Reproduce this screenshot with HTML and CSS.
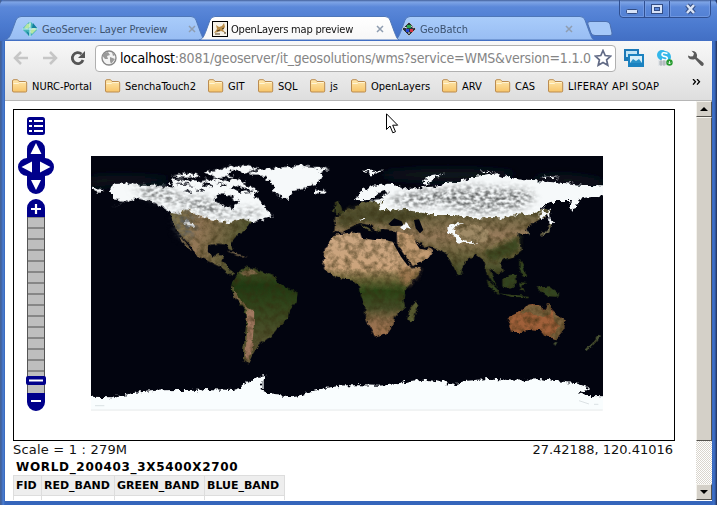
FILE: index.html
```html
<!DOCTYPE html>
<html lang="en">
<head>
<meta charset="utf-8">
<title>OpenLayers map preview</title>
<link rel="stylesheet" href="styles.css">
</head>
<body>
<svg class="defs" aria-hidden="true">
  <defs>
    <linearGradient id="tabIdle" x2="0" y2="1"><stop offset="0" stop-color="#a9ccfa"/><stop offset="1" stop-color="#98bdf3"/></linearGradient>
    <linearGradient id="tabOn" x2="0" y2="1"><stop offset="0" stop-color="#fff"/><stop offset="1" stop-color="#f7f7f7"/></linearGradient>
    <linearGradient id="fold" x2="0" y2="1"><stop offset="0" stop-color="#ffe9b0"/><stop offset="1" stop-color="#f7c468"/></linearGradient>
    <symbol id="folder" viewBox="0 0 16 14"><path d="M.5 12V2Q.5.7 2 .7H5.5L7 2.5H13.5Q14.7 2.5 14.7 4V12Q14.7 13 13.5 13H2Q.5 13 .5 12Z" fill="url(#fold)" stroke="#bb8c50"/><path d="M1.5 4.5H6.5L7.5 3.5H13.7" fill="none" stroke="#fff4d4"/></symbol>
    <symbol id="tab" viewBox="0 0 200 24"><path d="M0 24C4 23 5 20 7 15L11 4Q12.5.5 16 .5H186Q190 .5 191 4L195 15C197 20 198 23 200 24Z"/></symbol>
  </defs>
</svg>
<div class="window">
  <header class="titlebar">
    <div class="tab">
      <svg class="shape idle"><use href="#tab"/></svg>
      <svg class="fav" viewBox="0 0 16 16"><path d="M8 0L16 8L8 16L0 8Z" fill="#44b4b8"/><path d="M5 3L9 2L8 6L5 8L2 7ZM9 8L13 6L14 9L10 13L8 11Z" fill="#b5e6a2"/><path d="M8 0V16M0 8H16" stroke="#d2f2f5"/><path d="M11 2L15 7L10 7ZM4 10L7 12L7 15Z" fill="#157e9e"/></svg>
      <span class="label t1">GeoServer: Layer Preview</span>
      <svg class="close" viewBox="0 0 8 8"><path d="M1 1L7 7M7 1L1 7"/></svg>
    </div>
    <div class="tab second">
      <svg class="shape on"><use href="#tab"/></svg>
      <svg class="fav" viewBox="0 0 16 16"><rect x=".5" y=".5" width="15" height="15" fill="#f6f2e7" stroke="#000"/><path d="M2 12L5 8L4 4L7 6L10 5L12 2L13 6L11 9L14 12L9 10L6 11Z" fill="#b98d48"/><path d="M3 13H8M10 8L12 7M5 10L8 9M12 12H14" stroke="#4c3a20"/></svg>
      <span class="label t2">OpenLayers map preview</span>
      <svg class="close" viewBox="0 0 8 8"><path d="M1 1L7 7M7 1L1 7"/></svg>
    </div>
    <div class="tab third">
      <svg class="shape idle"><use href="#tab"/></svg>
      <svg class="fav small" viewBox="0 0 14 14"><path d="M7 0L14 7L7 14L0 7Z" fill="#29323c" stroke="#e6eefb" stroke-width=".6"/><path d="M5 3H9V6H5Z" fill="#29a84b"/><path d="M4 7H7V10H4Z" fill="#2446d8"/><path d="M8 7H11V10H8Z" fill="#d23646"/><path d="M2 5L5 6M9 4L12 6M7 10V12" stroke="#dce7f4"/></svg>
      <span class="label t3">GeoBatch</span>
      <svg class="close" viewBox="0 0 8 8"><path d="M1 1L7 7M7 1L1 7"/></svg>
    </div>
    <svg class="newtab" viewBox="0 0 26 16"><path d="M3 .5H19Q22 .5 23 3L25 12Q25.5 14.5 23 14.5H8Q5 14.5 4 12L.8 3Q0 .5 3 .5Z" fill="#a5c8f8" stroke="#4b6fae"/></svg>
    <svg class="winbtns" viewBox="0 0 94 18"><path d="M1.5 0V14Q1.5 17.500 5 17.500H89Q92.500 17.500 92.500 14V0M26.500 1V17M51.500 1V17" fill="none" stroke="#2f4f91"/><path d="M2.500 1V14Q3 16.500 5 16.500H25.500V1M27.500 1V16.500H50.500V1M52.500 1V16.500H89Q91.500 16.500 91.500 14V1" fill="none" stroke="#7da1e6" opacity=".65"/><rect x="8.500" y="9.500" width="11" height="4" rx="1" fill="#d6e2f8" stroke="#334d83"/><rect x="33.500" y="4.500" width="11" height="9" fill="#d6e2f8" stroke="#334d83"/><rect x="36.500" y="7.500" width="5" height="3" fill="#5b86d6" stroke="#334d83"/><path d="M69 5L76 13M76 5L69 13" stroke="#334d83" stroke-width="4.500"/><path d="M69 5L76 13M76 5L69 13" stroke="#d9e4f7" stroke-width="2.500"/></svg>
  </header>
  <div class="chrome">
    <nav class="toolbar">
      <svg class="nav" viewBox="0 0 80 20"><path d="M2 10H15M8 4L2 10L8 16M30 10H43M37 4L43 10L37 16" fill="none" stroke="#c6c6c6" stroke-width="2.500"/><path d="M68.500 6A5.500 5.500 0 1 0 70 12" fill="none" stroke="#555" stroke-width="2.800"/><path d="M72 3V10H65Z" fill="#555"/></svg>
      <div class="omnibox">
        <svg class="globe" viewBox="0 0 16 16"><circle cx="8" cy="8" r="7" fill="#f3f3f3" stroke="#858585" stroke-width="1.300"/><path d="M3 3L7 2L9 5L6 6L7 9L4 9L1.500 6ZM9 7L14 9L10 14L9 11ZM11 2L14 5L12 6Z" fill="#9a9a9a"/></svg>
        <span class="url"><b>localhost</b>:8081/geoserver/it_geosolutions/wms?service=WMS&amp;version=1.1.0</span>
        <svg class="star" viewBox="0 0 18 18"><path d="M9 1.500L11.200 6.500L16.700 7.100L12.600 10.800L13.800 16.200L9 13.400L4.200 16.200L5.400 10.800L1.300 7.100L6.800 6.500Z" fill="#fff" stroke="#626b86" stroke-width="1.700"/></svg>
      </div>
      <svg class="ext pics" viewBox="0 0 20 20"><rect width="15" height="12" y="1" fill="#1c79b7"/><rect x="2" y="3" width="11" height="6" fill="#c3e5f5"/><rect x="4" y="6" width="16" height="13" fill="#1b82c0"/><rect x="6" y="8" width="12" height="7" fill="#d8eff8"/><path d="M6 15L9 11L12 13L15 11L18 15Z" fill="#2a91c9"/></svg>
      <svg class="ext skype" viewBox="0 0 17 18"><circle cx="6" cy="6" r="5" fill="#34b7ea"/><circle cx="9" cy="8" r="6" fill="#34b7ea"/><path d="M11.500 4.500Q6 2.500 6 5.500Q6 7 9 7.500Q12 8.200 11 10.200Q9.500 12 6 10" fill="none" stroke="#fff" stroke-width="1.600"/><path d="M2 11H12V17H2Z" fill="#e3e6e9"/><path d="M3 13H11M3 15H11M5 11V17M8 11V17" stroke="#8c969c" stroke-width=".6"/><circle cx="13.500" cy="13.500" r="3.200" fill="#269b2e"/><path d="M13.500 12V15M12 13.500L13.500 15L15 13.500" fill="none" stroke="#fff" stroke-width=".8"/></svg>
      <svg class="ext wrench" viewBox="0 0 18 17"><path d="M1 5.500Q1 9.500 5.500 9.500Q7 9.500 8 9L14 15.500Q15.500 16.500 16.500 15Q17.300 13.700 16 12.600L9.800 7.500Q11 1 4.500.8L7 3.500L6 6.200L3.500 6.600Z" fill="#5a5a5a"/></svg>
    </nav>
    <nav class="bookmarks">
      <a><svg><use href="#folder"/></svg><span>NURC-Portal</span></a>
      <a><svg><use href="#folder"/></svg><span>SenchaTouch2</span></a>
      <a><svg><use href="#folder"/></svg><span>GIT</span></a>
      <a><svg><use href="#folder"/></svg><span>SQL</span></a>
      <a><svg><use href="#folder"/></svg><span>js</span></a>
      <a><svg><use href="#folder"/></svg><span>OpenLayers</span></a>
      <a><svg><use href="#folder"/></svg><span>ARV</span></a>
      <a><svg><use href="#folder"/></svg><span>CAS</span></a>
      <a><svg><use href="#folder"/></svg><span class="wide">LIFERAY API SOAP</span></a>
      <svg class="more" viewBox="0 0 9 6"><path d="M1 0L3.500 2.800L1 5.600M5 0L7.500 2.800L5 5.600" fill="none" stroke="#000" stroke-width="1.300"/></svg>
    </nav>
    <div class="view">
      <main class="page">
        <div class="map">
          <svg class="controls" viewBox="14 110 44 305">
            <rect x="27" y="117" width="18" height="18" rx="2.500" fill="#00008b"/>
            <path d="M29 121H32M34 121H43M29 126H32M34 126H43M29 131H32M34 131H43" stroke="#fff" stroke-width="2"/>
            <path d="M27 149A9 9 0 0 1 45 149V158A9 9 0 0 1 45 176V185A9 9 0 0 1 27 185V176A9 9 0 0 1 27 158Z" fill="#00008b"/>
            <path d="M36 143L41.500 154H30.500ZM36 190L41 180H31ZM21.500 167L32 161.500V172.500ZM50.500 167L40 161.500V172.500Z" fill="#fff"/>
            <rect x="27.500" y="217" width="17" height="177" fill="#bebebe" stroke="#555"/>
            <path d="M28 228H44M28 239H44M28 250H44M28 261H44M28 272H44M28 283H44M28 294H44M28 305H44M28 316H44M28 327H44M28 338H44M28 349H44M28 360H44M28 371H44" stroke="#747474" stroke-width="1.700"/>
            <path d="M27 217V208A9 9 0 0 1 45 208V217ZM27 393H45V402A9 9 0 0 1 27 402Z" fill="#00008b"/>
            <path d="M31 209H41M36 204V214M31 401H41" stroke="#fff" stroke-width="2.200"/>
            <rect x="26" y="376" width="20" height="9" rx="2" fill="#00008b"/><path d="M29 380.500H43" stroke="#fff" stroke-width="2"/>
          </svg>
          <svg class="world" viewBox="91 156 512 255">
            <defs>
              <filter id="rough" x="0" y="0" width="1560" height="790" filterUnits="userSpaceOnUse" color-interpolation-filters="sRGB">
                <feTurbulence type="fractalNoise" baseFrequency=".06" numOctaves="3" seed="7" result="n"/>
                <feDisplacementMap in="SourceGraphic" in2="n" scale="14" xChannelSelector="R" yChannelSelector="G" result="d"/>
                <feTurbulence type="fractalNoise" baseFrequency=".05" numOctaves="5" seed="21"/>
                <feColorMatrix values="0 0 0 0 .2  0 0 0 0 .17  0 0 0 0 .06  1.300 0 0 0 -.5" result="g"/>
                <feComposite in="g" in2="d" operator="in" result="s"/>
                <feMerge><feMergeNode in="d"/><feMergeNode in="s"/></feMerge>
              </filter>
              <filter id="snowy" x="0" y="0" width="1580" height="790" filterUnits="userSpaceOnUse" color-interpolation-filters="sRGB">
                <feTurbulence type="fractalNoise" baseFrequency=".07" numOctaves="3" seed="4" result="n"/>
                <feDisplacementMap in="SourceGraphic" in2="n" scale="22" xChannelSelector="R" yChannelSelector="G"/>
              </filter>
              <filter id="speckle" x="0" y="0" width="1560" height="790" filterUnits="userSpaceOnUse" color-interpolation-filters="sRGB">
                <feGaussianBlur in="SourceGraphic" stdDeviation="12" result="b"/>
                <feTurbulence type="fractalNoise" baseFrequency=".07 .12" numOctaves="5" seed="12"/>
                <feColorMatrix values="0 0 0 0 .36  0 0 0 0 .37  0 0 0 0 .37  2.600 0 0 0 -.9"/>
                <feComposite in2="b" operator="in"/>
              </filter>
              <filter id="soft" x="-30%" y="-30%" width="160%" height="160%"><feGaussianBlur stdDeviation="12"/></filter>
              <filter id="blend" x="-30%" y="-30%" width="160%" height="160%"><feGaussianBlur stdDeviation="6"/></filter>
              <linearGradient id="af" gradientUnits="userSpaceOnUse" x1="0" y1="250" x2="0" y2="560"><stop offset="0" stop-color="#cba782"/><stop offset=".34" stop-color="#cca47c"/><stop offset=".44" stop-color="#6f673a"/><stop offset=".56" stop-color="#2b4516"/><stop offset=".72" stop-color="#444c27"/><stop offset=".85" stop-color="#94704f"/><stop offset="1" stop-color="#a2744f"/></linearGradient>
              <linearGradient id="sa" gradientUnits="userSpaceOnUse" x1="0" y1="350" x2="0" y2="630"><stop offset="0" stop-color="#4a5328"/><stop offset=".2" stop-color="#203a12"/><stop offset=".5" stop-color="#38481f"/><stop offset="1" stop-color="#665a3a"/></linearGradient>
              <linearGradient id="us" x2="1" y2=".25"><stop offset="0" stop-color="#77724a"/><stop offset=".4" stop-color="#947857"/><stop offset="1" stop-color="#4d532d"/></linearGradient>
              <linearGradient id="asia" gradientUnits="userSpaceOnUse" x1="0" y1="180" x2="0" y2="400"><stop offset="0" stop-color="#64603c"/><stop offset=".35" stop-color="#987c5c"/><stop offset=".6" stop-color="#6e653f"/><stop offset="1" stop-color="#293b18"/></linearGradient>
            </defs>
            <rect x="91" y="156" width="512" height="255" fill="#02040f"/>
            <g transform="translate(85 150) scale(.33333)">
              <path d="M18 80Q120 70 250 85L250 100L100 105L18 110ZM900 65Q1100 45 1300 68L1250 90L1050 95L900 85ZM1350 80Q1450 65 1553 90V110L1350 100Z" fill="#08171f" filter="url(#soft)"/>
              <g filter="url(#rough)">
                <path d="M258 190L320 172L400 185L505 210L480 240L450 262L438 278L443 302L432 298L425 284L400 281L370 285L368 305L382 323L400 312L415 314L409 335L425 341L432 360L450 372L440 377L410 353L370 333L335 317L318 287L290 258L265 225Z" fill="url(#us)"/>
                <path d="M288 260L322 302L314 300L286 267ZM425 305L455 310L490 323L455 317Z" fill="#77664b"/>
                <path d="M445 395L460 370L480 350L510 356L570 380L582 402L612 415L638 430L635 455L615 480L612 502L590 520L570 548L545 568L525 582L512 598L502 615L490 640L474 625L474 600L480 560L485 500L478 480L455 450L440 420Z" fill="url(#sa)"/>
                <path d="M485 475L508 480L506 540L500 600L488 630L480 615L487 540Z" fill="#a17860"/>
                <path d="M440 410L459 440L487 475L492 490L475 473L450 444ZM465 368L500 355L520 373L480 380Z" fill="#8c7454"/>
                <g transform="translate(765 0)">
                  <path d="M-15 222L-14 200L0 198L10 182L42 176L60 160L130 150L200 165L350 180L600 178L632 176L625 195L600 208L570 225L558 238L566 254L540 254L530 246L540 270L545 300L520 320L492 326L480 338L490 362L474 374L458 360L447 354L460 388L474 412L458 400L440 370L430 330L410 314L385 325L370 345L366 374L355 376L340 350L320 312L290 297L250 287L230 270L205 252L160 242L130 240L108 240L90 225L60 218L30 232L10 248L-17 246Z" fill="url(#asia)"/>
                  <path d="M-10 220L-5 200L15 183L60 170L180 182L280 190L250 205L190 215L120 218L60 214L10 235Z" fill="#4e4b29" filter="url(#blend)"/>
                  <path d="M470 290L540 255L540 300L500 322L450 330L430 310Z" fill="#3c4820" filter="url(#blend)"/>
                  <path d="M-15 160L-3 154L5 175L10 190L-12 192ZM-27 178L-15 172L-18 188Z" fill="#414624"/>
                  <path d="M60 220L88 235L95 245L80 240ZM108 225L124 242L115 245Z" fill="#5b5833"/>
                  <path d="M-20 255L30 248L60 248L65 263L100 270L112 266L160 275L172 290L202 340L215 357L242 352L235 375L205 408L193 425L190 450L195 472L165 500L160 522L140 550L105 560L92 535L75 502L76 470L62 435L60 410L42 393L20 388L-15 382L-40 362L-52 335L-45 300Z" fill="url(#af)"/>
                  <path d="M190 345L215 360L240 354L233 375L203 408L190 400L175 370Z" fill="#9c7750" filter="url(#blend)"/>
                  <path d="M170 244L218 254L240 290L262 290L277 305L265 325L215 348L195 315L172 280Z" fill="#c39b72"/>
                  <path d="M202 510L210 474L230 454L234 466L221 510L210 514Z" fill="#585c32"/>
                  <path d="M347 240L405 222L445 245L440 275L365 277Z" fill="#a08b67"/>
                  <path d="M440 388L472 418L479 435L464 427L445 403ZM476 430L515 435L566 437L565 442L515 441ZM487 388L510 374L528 374L530 398L512 416L487 408ZM540 397L558 399L546 407L555 425L544 422ZM590 408L610 412L626 409L655 431L650 440L623 439L605 427ZM538 325L549 345L558 377L546 380L538 352Z" fill="#334520"/>
                  <path d="M504 502L530 490L545 482L562 464L580 462L604 468L611 486L626 458L640 486L673 510L672 539L650 568L613 557L600 541L575 538L545 549L515 549L508 530Z" fill="#a0603a"/>
                  <path d="M562 464L604 468L610 488L626 458L635 484L610 502L570 486L540 493ZM638 486L673 510L672 539L650 568L630 559L655 530L640 507Z" fill="#7b623d"/>
                  <path d="M640 577H652L645 588ZM736 600L757 580L771 557L780 560L760 585L742 603Z" fill="#4a5638"/>
                  <path d="M600 253L622 240L628 215L635 216L628 244L605 257ZM560 240L570 250L566 257Z" fill="#858164"/>
                </g>
              </g>
              <g fill="#02040f">
                <path d="M910 222L928 205L950 214L956 227L918 228ZM987 210L1002 208L1015 240L1005 250L992 235ZM926 282L934 282L975 345L969 348L948 320ZM993 280L1020 293L1032 289L1026 300L1004 296Z"/>
              </g>
              <g fill="#f6f9fa" filter="url(#snowy)">
                <path d="M75 125L85 104L130 98L175 107L230 108L265 112L255 92L282 86L335 95L390 85L420 94L440 85L465 92L490 108L520 118L505 136L535 163L560 199L530 211L500 216L470 206L430 217L400 213L350 200L310 175L285 190L255 185L235 172L200 153L150 145L115 158L75 176L125 153L85 148ZM260 78L315 67L350 80L300 83ZM356 69L410 56L455 53L425 71L450 79L390 83ZM410 53L480 48L525 54L480 67ZM18 110L55 121L45 128L18 121Z"/>
                <path d="M490 68L530 59L600 51L650 47L702 52L732 56L705 67L712 79L694 102L662 112L625 121L607 146L592 145L570 124L555 92L540 78L503 76ZM685 122L700 118L725 122L718 132L690 129Z"/>
                <path d="M300 176L335 175L380 204L345 199ZM300 210L332 225L330 238L298 221Z"/>
                <g transform="translate(765 0)">
                  <path d="M45 150L60 125L100 107L150 101L200 118L250 112L307 108L317 95L350 96L390 82L430 78L470 70L500 82L560 92L620 95L680 100L730 105L788 106L810 106V136H788L750 142L724 145L699 186L688 173L693 153L640 153L615 165L600 182L570 195L540 190L500 203L450 201L410 208L350 195L280 195L230 185L180 177L140 184L115 180L125 160L80 151ZM65 62L130 62L95 74ZM245 100L265 80L315 72L278 88L260 101ZM420 60L460 69H430ZM600 80L665 80L625 85Z"/>
                  <path d="M318 235L345 220L370 220L350 228L340 240L363 268L410 280L400 282L352 277L335 250ZM180 232L200 218L214 232L190 239ZM595 205L610 175L622 190L604 210ZM629 173L632 210L640 218L629 220L624 192ZM50 207L74 203L65 210Z"/>
                </g>
                <path d="M385 150L400 130L435 136L460 150L446 178L430 170L410 166ZM432 116L454 105L475 115L510 124L480 127ZM855 153L875 132L900 122L916 125L890 138L895 150ZM270 98L310 100L330 106L290 104ZM350 100L372 96L380 112L360 108ZM390 98L430 104L420 110ZM330 120L350 118L356 126ZM340 74L380 76L360 82ZM300 124L318 122L312 130Z" fill="#02040f"/>
              </g>
              <g filter="url(#speckle)">
                <path d="M140 112L230 115L310 145L370 145L410 180L450 185L520 175L530 195L400 200L290 165L190 145ZM910 145L1020 120L1160 110L1330 120L1350 150L1300 175L1180 190L1060 165L940 170ZM265 195H330V260H280Z" fill="#000"/>
              </g>
              <g filter="url(#snowy)"><path d="M18 740L80 742L130 731L165 727L230 721L340 719L350 724L360 717L440 720L468 714L472 704L500 692L515 679L548 674L530 689L530 721L560 734L620 739L660 733L720 714L780 706L825 706L880 707L945 702L975 693L1015 689L1060 694L1105 704L1145 692L1180 689L1225 686L1290 692L1360 687L1405 692L1465 698L1516 715L1480 729L1503 738L1575 739V770H0V740Z" fill="#f9fdfe"/></g>
              <path d="M18 755H1560V790H18Z" fill="#f9fdfe"/>
              <path d="M18 780H1553" stroke="#e9eaea" stroke-width="3"/><path d="M30 767L58 767M1482 752L1512 762M1527 763L1540 763" stroke="#ccd3d6" stroke-width="2"/>
            </g>
          </svg>
        </div>
        <div class="status"><span class="scale">Scale = 1 : 279M</span><span class="coords">27.42188, 120.41016</span></div>
        <div class="caption">WORLD_200403_3X5400X2700</div>
        <div class="table">
          <span class="th">FID</span><span class="th">RED_BAND</span><span class="th">GREEN_BAND</span><span class="th">BLUE_BAND</span>
          <span></span><span>2.0</span><span>5.0</span><span>20.0</span>
        </div>
      </main>
      <div class="scrollbar"><i class="btn up"></i><i class="thumb"></i><i class="track"></i><i class="btn down"></i></div>
    </div>
  </div>
  <svg class="cursor" viewBox="0 0 13 21"><path d="M.5.8V16.500L4 13L6.800 19.800L9.500 18.700L6.700 12.200H11.700Z" fill="#fff" stroke="#000"/></svg>
</div>
</body>
</html>
```
FILE: styles.css
```css
* { box-sizing: border-box; }
body { margin: 0; overflow: hidden; font-family: "DejaVu Sans Condensed", "DejaVu Sans", sans-serif; font-size: 11px; color: #000; }
svg { display: block; flex: none; }
.defs { position: absolute; width: 0; height: 0; }
.window { position: relative; width: 717px; height: 505px; display: flex; flex-direction: column; background: linear-gradient(90deg, #48618f 0, #3e66b0 2px, #4d80d2 3px, #3565bb 5px, #3565bb 712px, #3f72cb 714px, #2c4a88 716px, #1f2b4c); }
.titlebar { position: relative; height: 41px; padding: 17px 0 0 5px; display: flex; background: linear-gradient(#43609a 0, #7ea4e6 2px, #5b88d9 7px, #4c7bd0 24px, #426fc4); border-radius: 5px 5px 0 0; }
.tab { position: relative; width: 200px; height: 24px; margin-top: -1px; padding-left: 17px; display: flex; align-items: center; color: #3c526f; }
.shape { width: 200px; height: 24px; stroke: #4f77b8; }
.idle { fill: url(#tabIdle); }
.on { fill: url(#tabOn); }
.tab > :not(.shape) { position: relative; }
.tab > .shape { position: absolute; left: 0; top: 0; }
.second { z-index: 2; margin-left: -6px; padding-left: 13px; color: #111; }
.third { margin-left: -5px; padding-left: 8px; }
.fav { width: 16px; height: 16px; margin-top: 2px; }
.small { width: 14px; height: 14px; }
.label { margin: 2px 0 0 4px; white-space: nowrap; }
.t1 { width: 146px; letter-spacing: -.1px; }
.t2 { width: 144px; letter-spacing: -.2px; }
.t3 { width: 145px; letter-spacing: -.05px; }
.t2 { margin-left: 3px; margin-right: 1px; }
.close { width: 8px; height: 8px; margin-top: 1px; stroke: #8f9db0; stroke-width: 1.5; }
.newtab { width: 26px; height: 16px; margin: 4px 0 0 -7px; }
.winbtns { position: absolute; left: 618px; top: 0; width: 94px; height: 18px; }
.chrome { height: 460px; margin: 0 5px; background: #fff; display: flex; flex-direction: column; }
.toolbar { height: 33px; padding-left: 8px; display: flex; align-items: center; background: linear-gradient(#f8f8f8, #eaeaea); }
.nav { width: 80px; height: 20px; }
.omnibox { width: 521px; height: 27px; margin: 1px 9px 0 2px; border: 1px solid #b0b0b0; border-radius: 4px; background: #fff; display: flex; align-items: center; padding-left: 5px; }
.globe { width: 16px; height: 16px; }
.url { width: 472px; margin-left: 3px; overflow: hidden; white-space: nowrap; font-size: 14px; color: #858585; letter-spacing: -.2px; }
.url b { font-weight: normal; color: #000; }
.star { width: 18px; height: 18px; margin-left: 2px; }
.ext { margin-top: 1px; }
.pics { width: 20px; height: 20px; margin-left: -1px; }
.skype { width: 17px; height: 18px; margin-left: 12px; }
.wrench { width: 18px; height: 17px; margin-left: 14px; }
.bookmarks { position: relative; height: 27px; padding: 0 0 1px 7px; display: grid; grid-template-columns: 93px 103px 50px 52px 41px 91px 53px 53px 120px; align-items: center; background: linear-gradient(#eaeaea, #dedede); border-bottom: 1px solid #b6b6b6; }
.bookmarks a { display: flex; align-items: center; gap: 4px; white-space: nowrap; margin-top: -1px; }
.bookmarks a svg { width: 16px; height: 14px; }
.wide { letter-spacing: .25px; }
.more { position: absolute; left: 687px; top: 5px; width: 9px; height: 6px; }
.view { display: flex; height: 399px; overflow: hidden; }
.page { width: 691px; height: 399px; padding: 8px 0 0 8px; overflow: hidden; font-family: "DejaVu Sans", sans-serif; }
.map { width: 662px; height: 332px; border: 1px solid #000; display: flex; }
.controls { width: 44px; height: 305px; }
.world { width: 512px; height: 255px; margin: 46px 0 0 33px; }
.status { width: 660px; height: 17px; display: flex; justify-content: space-between; font-size: 13px; line-height: 17px; color: #111; }
.scale { letter-spacing: .2px; }
.caption { height: 17px; padding-left: 3px; font-size: 12px; line-height: 18px; font-weight: bold; letter-spacing: .68px; }
.table { display: grid; grid-template-columns: 28px 73px 90px 80px; grid-template-rows: 20px 20px; width: 272px; border-left: 1px solid #ddd; font-size: 11px; line-height: 17px; white-space: nowrap; }
.table span { border: solid #ddd; border-width: 1px 1px 0 0; padding-left: 2px; }
.table .th { background: #eee; font-weight: bold; line-height: 19px; }
.scrollbar { width: 16px; height: 399px; display: flex; flex-direction: column; background: #ebe9e4; }
.btn, .thumb { border: 1px solid; border-color: #f4f2ec #55534e #55534e #f4f2ec; background: #d4d0c8; }
.btn { height: 16px; display: flex; align-items: center; justify-content: center; }
.btn::before { content: ""; border: 4px solid transparent; }
.up::before { border-top: 0; border-bottom-color: #000; }
.down::before { border-bottom: 0; border-top-color: #000; }
.thumb { height: 324px; }
.track { flex: 1; background: repeating-conic-gradient(#d9d5cd 0 25%, #fff 0 50%) 0 0 / 2px 2px; }
.cursor { position: absolute; z-index: 5; left: 386px; top: 113px; width: 13px; height: 21px; }
```
